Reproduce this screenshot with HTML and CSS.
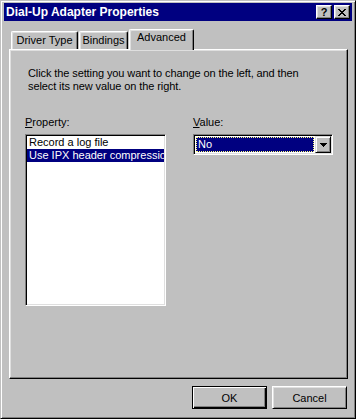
FILE: index.html
```html
<!DOCTYPE html>
<html lang="en">
<head>
    <meta charset="UTF-8">
    <title>Dial-Up Adapter Properties</title>
    <link rel="stylesheet" href="styles.css">
</head>
<body>
    <div class="window">
        <div class="titlebar">
            <span class="title">Dial-Up Adapter Properties</span>
            <div class="caption-buttons">
                <button class="caption-btn help">?</button>
                <button class="caption-btn close">
                    <svg width="8" height="7" viewBox="0 0 8 7">
                        <path d="M0 0h2v1h1v1h2v-1h1v-1h2v1h-1v1h-1v1h-1v1h1v1h1v1h1v1h-2v-1h-1v-1h-2v1h-1v1h-2v-1h1v-1h1v-1h1v-1h-1v-1h-1v-1h-1z" fill="#000"/>
                    </svg>
                </button>
            </div>
        </div>

        <div class="content">
            <div class="tabs">
                <div class="tab tab-driver">Driver Type</div>
                <div class="tab tab-bindings">Bindings</div>
                <div class="tab tab-advanced active">Advanced</div>
            </div>

            <div class="panel">
                <p class="intro">Click the setting you want to change on the left, and then<br>select its new value on the right.</p>

                <div class="fields">
                    <div class="field field-property">
                        <label><u>P</u>roperty:</label>
                        <div class="listbox">
                            <div class="item">Record a log file</div>
                            <div class="item selected">Use IPX header compression</div>
                        </div>
                    </div>
                    <div class="field field-value">
                        <label><u>V</u>alue:</label>
                        <div class="combo">
                            <div class="combo-field">
                                <span class="combo-text">No</span>
                            </div>
                            <div class="combo-btn">
                                <svg width="7" height="4" viewBox="0 0 7 4">
                                    <path d="M0 0h7v1h-1v1h-1v1h-1v1h-1v-1h-1v-1h-1v-1h-1z" fill="#000"/>
                                </svg>
                            </div>
                        </div>
                    </div>
                </div>
            </div>

            <div class="footer">
                <button class="btn default">OK</button>
                <button class="btn">Cancel</button>
            </div>
        </div>
    </div>
</body>
</html>
```

FILE: styles.css
```css
body {
    margin: 0;
    background-color: #c0c0c0;
    font-family: "Liberation Sans", Arial, sans-serif;
    font-size: 11px;
    color: #000;
}
.window {
    width: 356px;
    height: 419px;
    box-sizing: border-box;
    border: 1px solid;
    border-color: #c0c0c0 #000 #000 #c0c0c0;
    box-shadow: inset 1px 1px #fff, inset -1px -1px #808080;
    padding: 2px 3px 3px 3px;
    background-color: #c0c0c0;
    display: flex;
    flex-direction: column;
}
.titlebar {
    height: 18px;
    background-color: #000080;
    color: #fff;
    display: flex;
    align-items: center;
    justify-content: space-between;
    padding: 0 2px;
}
.title {
    font-weight: bold;
    font-size: 12px;
    line-height: 18px;
}
.caption-buttons {
    display: flex;
    gap: 2px;
}
.caption-btn {
    width: 16px;
    height: 14px;
    box-sizing: border-box;
    padding: 0;
    border: 1px solid;
    border-color: #fff #000 #000 #fff;
    box-shadow: inset -1px -1px #808080, inset 1px 1px #dfdfdf;
    background-color: #c0c0c0;
    font-family: "Liberation Sans", Arial, sans-serif;
    font-weight: bold;
    font-size: 11px;
    line-height: 11px;
    display: flex;
    align-items: center;
    justify-content: center;
}
.content {
    flex: 1;
    display: flex;
    flex-direction: column;
    padding: 0 4px 0 5px;
}
.tabs {
    display: flex;
    align-items: flex-end;
    gap: 1px;
    height: 20px;
    margin-top: 8px;
    padding-left: 2px;
}
.tab {
    height: 18px;
    box-sizing: border-box;
    border: 1px solid;
    border-bottom: none;
    border-color: #fff #000 #000 #fff;
    border-radius: 2px 2px 0 0;
    box-shadow: inset -1px 0 #808080, inset 1px 1px #dfdfdf;
    text-align: center;
    line-height: 16px;
}
.tab-driver {
    width: 67px;
}
.tab-bindings {
    width: 49px;
}
.tab-advanced {
    width: 65px;
}
.tab.active {
    height: 21px;
    margin-bottom: -1px;
    line-height: 15px;
    background-color: #c0c0c0;
    position: relative;
    z-index: 1;
}
.panel {
    height: 330px;
    box-sizing: border-box;
    border: 1px solid;
    border-color: #fff #000 #000 #fff;
    box-shadow: inset -1px -1px #808080, inset 1px 1px #dfdfdf;
    padding: 17px 14px 0 15px;
}
.intro {
    margin: 0 0 23px 3px;
    line-height: 13px;
    letter-spacing: -0.1px;
}
.fields {
    display: flex;
    gap: 27px;
}
.field label {
    display: block;
    line-height: 13px;
    margin-bottom: 5px;
}
.field-property {
    width: 141px;
}
.listbox {
    width: 141px;
    height: 172px;
    box-sizing: border-box;
    border: 1px solid;
    border-color: #808080 #fff #fff #808080;
    box-shadow: inset 1px 1px #000, inset -1px -1px #dfdfdf;
    background-color: #fff;
    padding: 1px;
    overflow: hidden;
}
.item {
    line-height: 13px;
    padding-left: 2px;
    white-space: nowrap;
    overflow: hidden;
}
.item.selected {
    background-color: #000080;
    color: #fff;
}
.combo {
    width: 140px;
    height: 21px;
    box-sizing: border-box;
    border: 1px solid;
    border-color: #808080 #fff #fff #808080;
    box-shadow: inset 1px 1px #000, inset -1px -1px #dfdfdf;
    background-color: #fff;
    padding: 1px;
    display: flex;
}
.combo-field {
    flex: 1;
    padding: 1px;
}
.combo-text {
    display: block;
    height: 15px;
    box-sizing: border-box;
    background-color: #000080;
    color: #fff;
    border: 1px dotted #ffff80;
    line-height: 13px;
    padding-left: 1px;
}
.combo-btn {
    width: 16px;
    height: 17px;
    box-sizing: border-box;
    border: 1px solid;
    border-color: #dfdfdf #000 #000 #dfdfdf;
    box-shadow: inset 1px 1px #fff, inset -1px -1px #808080;
    background-color: #c0c0c0;
    display: flex;
    align-items: center;
    justify-content: center;
}
.footer {
    display: flex;
    justify-content: flex-end;
    gap: 5px;
    margin-top: 7px;
    padding-right: 1px;
}
.btn {
    width: 75px;
    height: 23px;
    box-sizing: border-box;
    padding: 0;
    border: 1px solid;
    border-color: #fff #000 #000 #fff;
    box-shadow: inset 1px 1px #dfdfdf, inset -1px -1px #808080;
    background-color: #c0c0c0;
    font-family: "Liberation Sans", Arial, sans-serif;
    font-size: 11px;
    color: #000;
}
.btn.default {
    border-color: #000;
    box-shadow: inset 1px 1px #fff, inset -1px -1px #000, inset -2px -2px #808080;
}
```
